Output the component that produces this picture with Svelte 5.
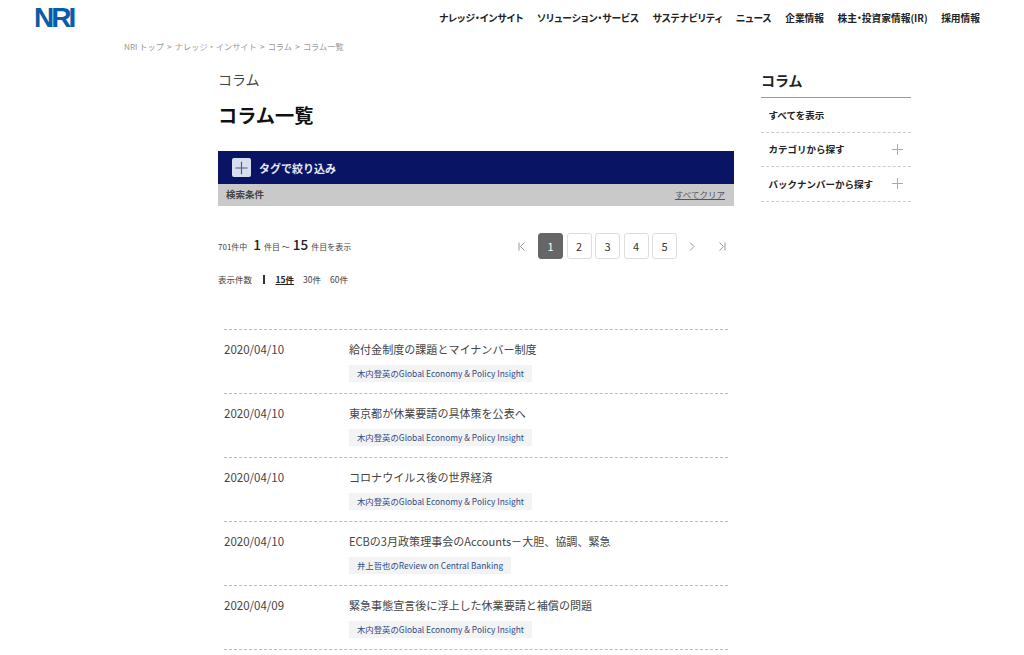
<script>
  const nav = ['ナレッジ・インサイト', 'ソリューション・サービス', 'サステナビリティ', 'ニュース', '企業情報', '株主・投資家情報(IR)', '採用情報'];
  const crumbs = ['NRI トップ', 'ナレッジ・インサイト', 'コラム', 'コラム一覧'];
  const kiuchi = '木内登英のGlobal Economy & Policy Insight';
  const rows = [
    { date: '2020/04/10', title: '給付金制度の課題とマイナンバー制度', tag: kiuchi },
    { date: '2020/04/10', title: '東京都が休業要請の具体策を公表へ', tag: kiuchi },
    { date: '2020/04/10', title: 'コロナウイルス後の世界経済', tag: kiuchi },
    { date: '2020/04/10', title: 'ECBの3月政策理事会のAccounts－大胆、協調、緊急', tag: '井上哲也のReview on Central Banking' },
    { date: '2020/04/09', title: '緊急事態宣言後に浮上した休業要請と補償の問題', tag: kiuchi }
  ];
  const pages = [1, 2, 3, 4, 5];
</script>

<div class="page">
  <header class="header">
    <a class="logo">NRI</a>
    <nav class="nav">
      {#each nav as item}
        <a>{item}</a>
      {/each}
    </nav>
  </header>

  <div class="crumbs">
    {#each crumbs as c, i}
      {#if i > 0}<span class="sep">&gt;</span>{/if}
      <span>{c}</span>
    {/each}
  </div>

  <div class="wrap">
    <main class="main">
      <p class="section">コラム</p>
      <h1>コラム一覧</h1>

      <div class="filter">
        <span class="plus-box">
          <svg width="20" height="20" viewBox="0 0 20 20"><path d="M10 3.5v13M3.5 10h13" stroke="#4a5a8c" stroke-width="1.2" fill="none" /></svg>
        </span>
        <span>タグで絞り込み</span>
      </div>
      <div class="cond">
        <span class="cond-label">検索条件</span>
        <a class="clear">すべてクリア</a>
      </div>

      <div class="pager-row">
        <div class="count">701件中<b class="first">1</b>件目 ～<b>15</b>件目を表示</div>
        <div class="pager">
          <svg class="arrow" width="8" height="9" viewBox="0 0 8 9"><path d="M1 .5v8M6.5 .5L2.5 4.5l4 4" stroke="#999" fill="none" /></svg>
          <div class="pages">
            {#each pages as p}
              <span class="pg" class:on={p === 1}>{p}</span>
            {/each}
          </div>
          <svg class="arrow next" width="6" height="9" viewBox="0 0 6 9"><path d="M1 .5l4 4-4 4" stroke="#999" fill="none" /></svg>
          <svg class="arrow last" width="8" height="9" viewBox="0 0 8 9"><path d="M7 .5v8M1.5 .5l4 4-4 4" stroke="#999" fill="none" /></svg>
        </div>
      </div>

      <div class="per">
        <span>表示件数</span>
        <i class="bar"></i>
        <a class="cur">15件</a>
        <a>30件</a>
        <a>60件</a>
      </div>

      <ul class="list">
        {#each rows as r}
          <li>
            <span class="date">{r.date}</span>
            <div class="body">
              <div class="title">{r.title}</div>
              <span class="tag">{r.tag}</span>
            </div>
          </li>
        {/each}
      </ul>
    </main>

    <aside class="side">
      <h2>コラム</h2>
      <a class="side-item">すべてを表示</a>
      <a class="side-item">カテゴリから探す
        <svg width="11" height="11" viewBox="0 0 11 11"><path d="M5.5 0v11M0 5.5h11" stroke="#aaa" fill="none" /></svg>
      </a>
      <a class="side-item">バックナンバーから探す
        <svg width="11" height="11" viewBox="0 0 11 11"><path d="M5.5 0v11M0 5.5h11" stroke="#aaa" fill="none" /></svg>
      </a>
    </aside>
  </div>
</div>

<style>
  :global(body) {
    margin: 0;
    background: #fff;
  }

  .page {
    height: 655px;
    overflow: hidden;
    font-family: "Noto Sans CJK JP", "Noto Sans", sans-serif;
    color: #333;
  }

  .header {
    display: flex;
    justify-content: space-between;
    align-items: flex-start;
    padding: 0 44px 0 34px;
    height: 39px;
  }

  .logo {
    font-family: "Liberation Sans", sans-serif;
    font-weight: 700;
    font-size: 28px;
    line-height: 20px;
    margin-top: 8px;
    letter-spacing: -3px;
    color: #0a5ba8;
  }

  .nav {
    display: flex;
    gap: 13.5px;
    margin-top: 10px;
    font-size: 9.72px;
    line-height: 16px;
    font-weight: 700;
    font-feature-settings: "palt";
    color: #222;
  }

  .crumbs {
    display: flex;
    gap: 3.2px;
    padding-left: 124px;
    font-size: 8.2px;
    line-height: 14px;
    color: #999;
  }

  .wrap {
    display: flex;
    gap: 27px;
    padding: 16px 0 0 218px;
  }

  .main {
    width: 516px;
  }

  .section {
    margin: 0;
    font-size: 14px;
    line-height: 20px;
    color: #444;
  }

  h1 {
    margin: 11px 0 0;
    font-size: 19.2px;
    line-height: 30px;
    font-weight: 700;
    color: #111;
  }

  .filter {
    display: flex;
    align-items: center;
    gap: 8px;
    margin-top: 21px;
    height: 33px;
    padding-left: 14px;
    background: #0a1464;
    color: #e8eaf4;
    font-size: 11px;
    font-weight: 700;
  }

  .plus-box {
    display: flex;
    align-items: center;
    justify-content: center;
    width: 19px;
    height: 19px;
    border-radius: 2px;
    background: #d8deee;
  }

  .cond {
    display: flex;
    justify-content: space-between;
    align-items: center;
    height: 22px;
    padding: 0 9px 2px 8px;
    box-sizing: border-box;
    background: #c9c9c9;
    font-size: 9.5px;
    color: #444;
  }

  .cond-label {
    font-weight: 700;
  }

  .clear {
    font-size: 8.5px;
    text-decoration: underline;
    color: #555;
  }

  .pager-row {
    display: flex;
    justify-content: space-between;
    align-items: center;
    margin-top: 27px;
    height: 26px;
  }

  .count {
    padding-bottom: 4px;
    font-size: 8px;
    color: #444;
  }

  .count b {
    font-size: 13.5px;
    font-weight: 500;
    color: #222;
    margin: 0 3px;
  }

  .count .first {
    margin-left: 6px;
  }

  .pager {
    display: flex;
    align-items: center;
    margin-right: 8px;
  }

  .pages {
    display: flex;
    gap: 3.5px;
    margin: 0 12px;
  }

  .pg {
    display: flex;
    align-items: center;
    justify-content: center;
    box-sizing: border-box;
    width: 25px;
    height: 26px;
    border: 1px solid #ddd;
    border-radius: 3px;
    font-size: 11px;
    color: #333;
  }

  .pg.on {
    background: #666;
    border-color: #666;
    color: #fff;
  }

  .arrow.last {
    margin-left: 23px;
  }

  .per {
    display: flex;
    align-items: center;
    gap: 9px;
    margin-top: 13px;
    height: 14px;
    font-size: 8.5px;
    color: #444;
  }

  .bar {
    width: 1.5px;
    height: 9px;
    margin: 0 2px 0 2px;
    background: #333;
  }

  .cur {
    font-weight: 700;
    text-decoration: underline;
    color: #222;
  }

  .list {
    list-style: none;
    margin: 43px 6px 0;
    padding: 0;
    border-top: 1px dashed #bbb;
  }

  .list li {
    display: flex;
    box-sizing: border-box;
    height: 64px;
    padding-top: 9px;
    border-bottom: 1px dashed #bbb;
  }

  .date {
    width: 125px;
    font-size: 11.5px;
    line-height: 20px;
    color: #444;
  }

  .title {
    font-size: 11.05px;
    line-height: 20px;
    color: #444;
  }

  .tag {
    display: block;
    width: fit-content;
    margin-top: 6px;
    padding: 0 8px;
    background: #f3f3f3;
    font-size: 8.4px;
    line-height: 17px;
    color: #2f4a86;
  }

  .side {
    width: 150px;
  }

  h2 {
    margin: 1px 0 0;
    padding-bottom: 7px;
    border-bottom: 1px solid #999;
    font-size: 14px;
    line-height: 20px;
    font-weight: 700;
    color: #222;
  }

  .side-item {
    display: flex;
    justify-content: space-between;
    align-items: center;
    box-sizing: border-box;
    height: 34.5px;
    padding: 0 8px 0 7.5px;
    border-bottom: 1px dashed #ccc;
    font-size: 9.5px;
    font-weight: 700;
    color: #222;
  }
</style>
